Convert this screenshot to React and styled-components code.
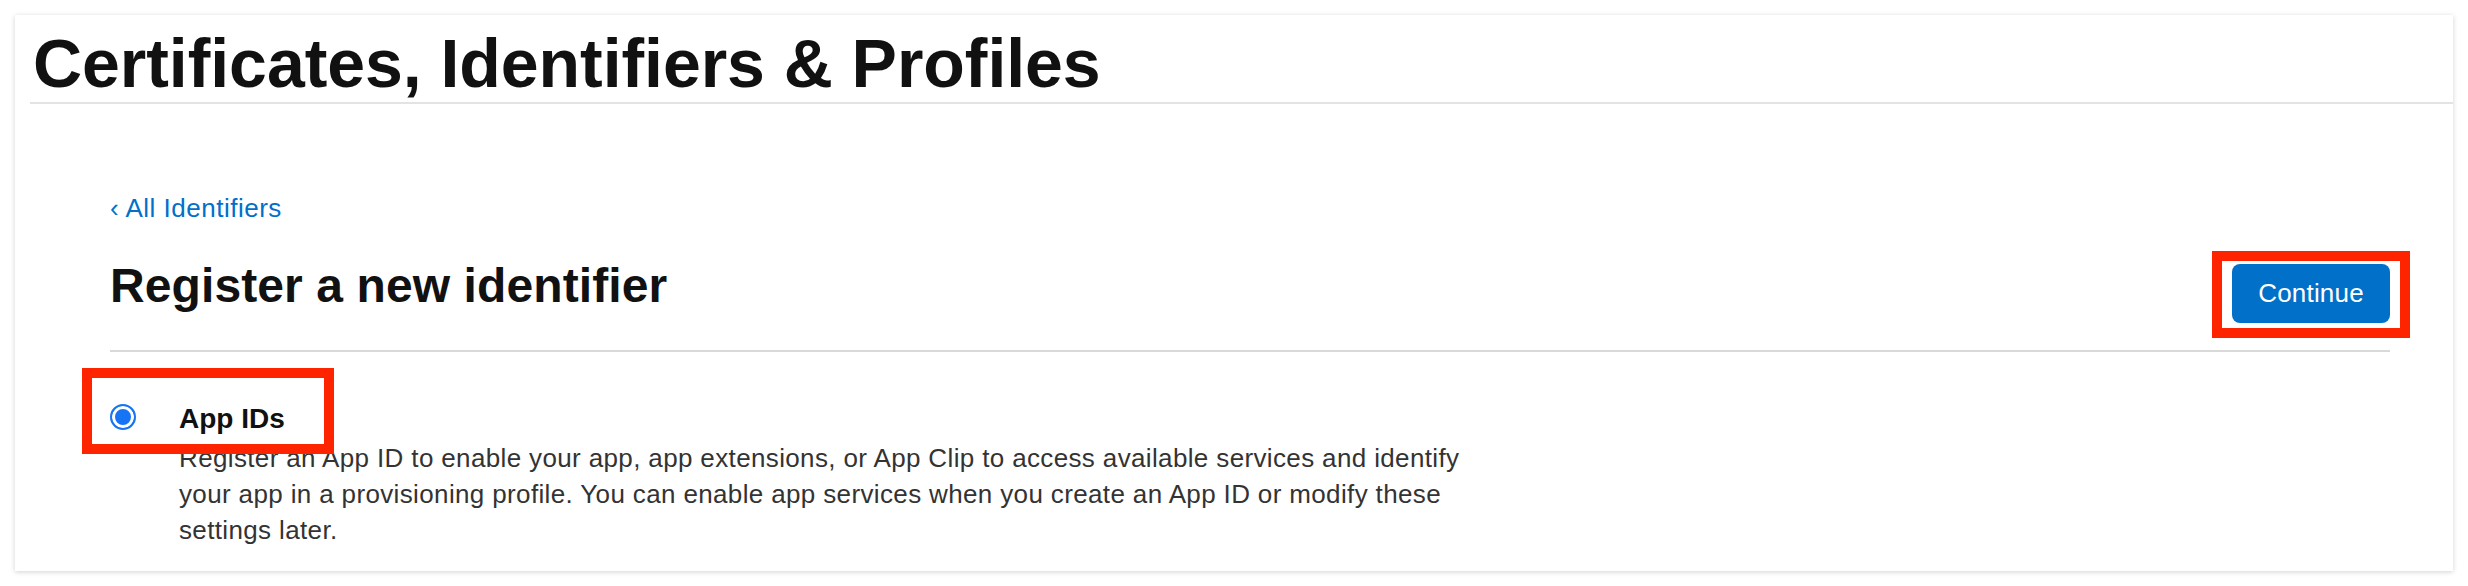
import styled, { createGlobalStyle } from "styled-components";

const GlobalStyle = createGlobalStyle`
  html, body {
    margin: 0;
    padding: 0;
    background: #ffffff;
    font-family: "Liberation Sans", Arial, sans-serif;
    color: #1d1d1f;
  }
`;

const Card = styled.div`
  margin: 15px;
  background: #fff;
  box-shadow: 0 1px 5px rgba(0, 0, 0, 0.18);
`;

const Header = styled.header`
  margin-left: 15px;
  padding: 14px 0 5px 3px;
  border-bottom: 2px solid #e3e3e3;
`;

const PageTitle = styled.h1`
  margin: 0;
  font-size: 68px;
  line-height: 68px;
  font-weight: 700;
  letter-spacing: -0.05px;
  color: #111;
`;

const Content = styled.main`
  padding: 89px 63px 23px 95px;
`;

const BackLink = styled.a`
  display: block;
  font-size: 26px;
  line-height: 30px;
  letter-spacing: 0.5px;
  color: #0070c9;
  text-decoration: none;
  cursor: pointer;
`;

const TitleRow = styled.div`
  display: flex;
  align-items: flex-start;
  justify-content: space-between;
  margin-top: 39px;
  padding-bottom: 27px;
  border-bottom: 2px solid #d9d9d9;
`;

const Heading = styled.h2`
  margin: 0;
  font-size: 48px;
  line-height: 47px;
  font-weight: 700;
  letter-spacing: 0.1px;
  color: #111;
`;

const Highlight = styled.div`
  position: relative;
  display: inline-flex;
  align-items: center;

  &::after {
    content: "";
    position: absolute;
    inset: ${(p) => p.$inset};
    border: 10px solid #fe2400;
    pointer-events: none;
  }
`;

const Button = styled.button`
  margin-top: 2px;
  width: 158px;
  height: 59px;
  border: none;
  border-radius: 8px;
  background: #0070c9;
  color: #fff;
  font-family: "Liberation Sans", Arial, sans-serif;
  font-size: 26px;
  letter-spacing: 0.2px;
  cursor: pointer;
`;

const Option = styled.div`
  margin-top: 50px;
`;

const OptionLabel = styled.label`
  display: flex;
  align-items: center;
  gap: 43px;
  cursor: pointer;
`;

const Radio = styled.span`
  box-sizing: border-box;
  width: 26px;
  height: 26px;
  margin-top: -4px;
  border-radius: 50%;
  border: 2.5px solid #1774f4;
  background: ${(p) => (p.$checked ? "#1774f4" : "#fff")};
  box-shadow: inset 0 0 0 3px #fff;
`;

const OptionName = styled.span`
  font-size: 28px;
  line-height: 34px;
  font-weight: 700;
  color: #111;
`;

const Description = styled.p`
  margin: 4px 0 0 69px;
  max-width: 1310px;
  font-size: 26px;
  line-height: 36px;
  letter-spacing: 0.36px;
  color: #333;
`;

export default function App() {
  return (
    <>
      <GlobalStyle />
      <Card>
        <Header>
          <PageTitle>Certificates, Identifiers &amp; Profiles</PageTitle>
        </Header>
        <Content>
          <BackLink>‹ All Identifiers</BackLink>
          <TitleRow>
            <Heading>Register a new identifier</Heading>
            <Highlight $inset="-11px -20px -15px -20px">
              <Button>Continue</Button>
            </Highlight>
          </TitleRow>
          <Option>
            <Highlight $inset="-34px -49px -18px -28px">
              <OptionLabel>
                <Radio $checked />
                <OptionName>App IDs</OptionName>
              </OptionLabel>
            </Highlight>
            <Description>
              Register an App ID to enable your app, app extensions, or App Clip to access
              available services and identify your app in a provisioning profile. You can
              enable app services when you create an App ID or modify these settings later.
            </Description>
          </Option>
        </Content>
      </Card>
    </>
  );
}
